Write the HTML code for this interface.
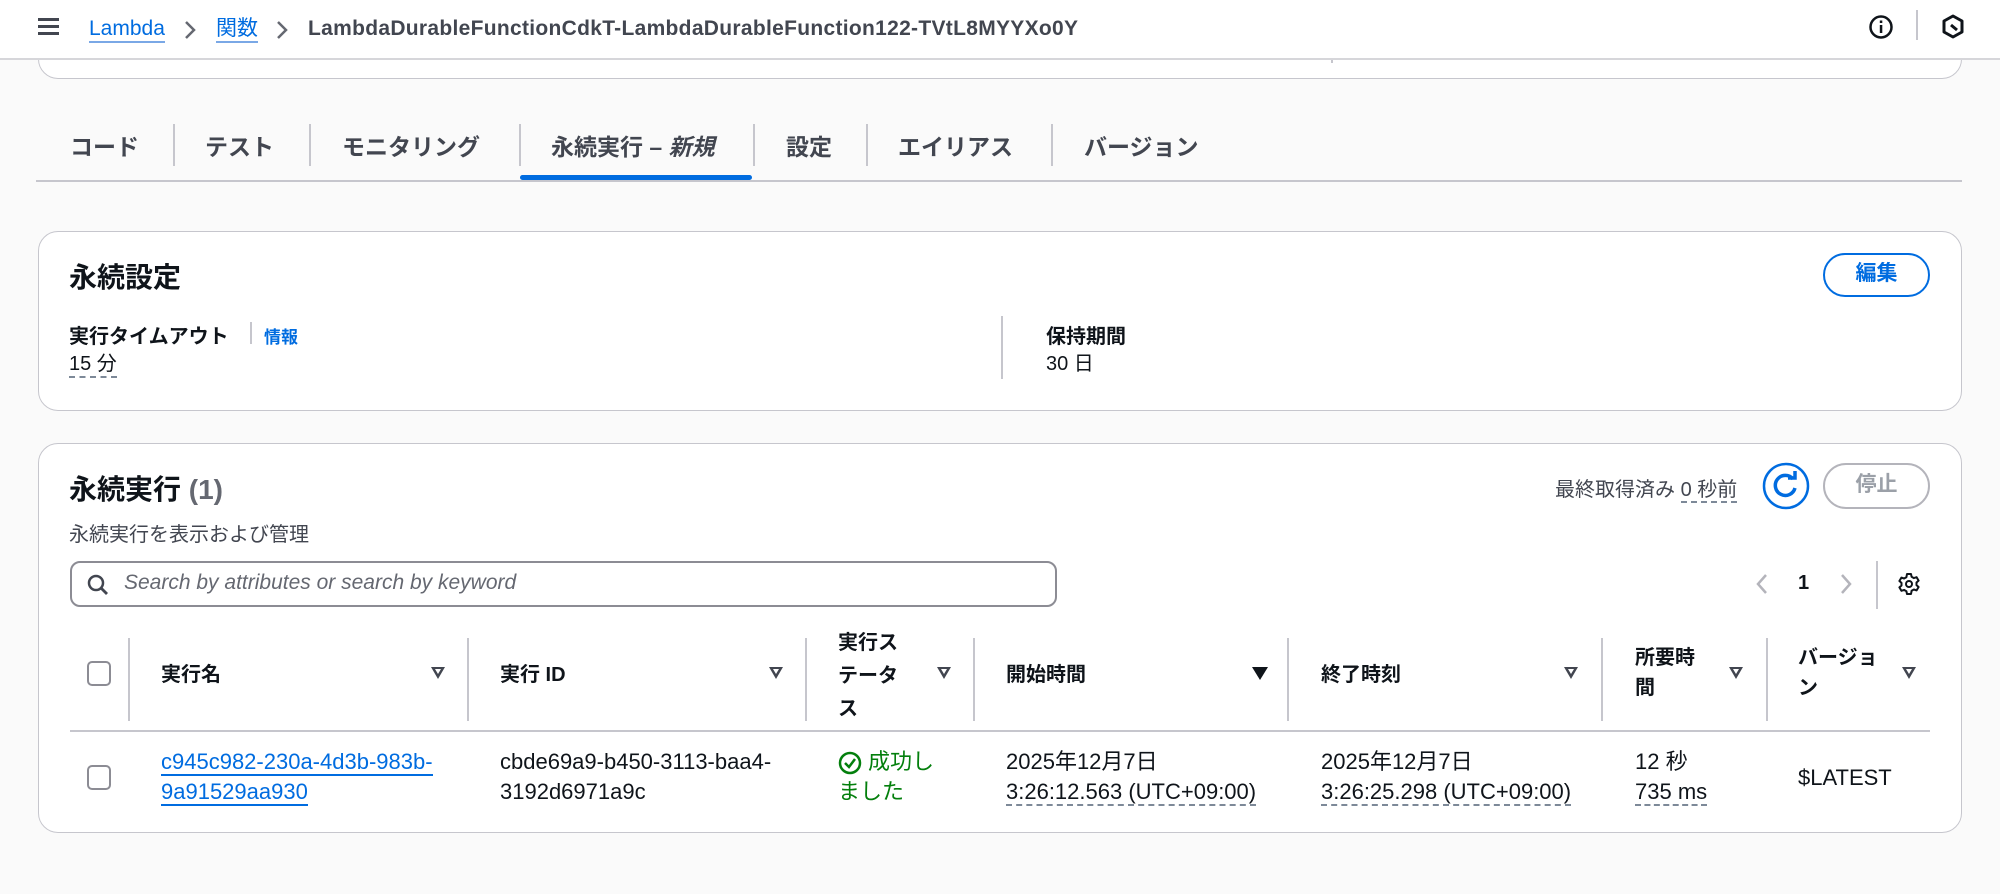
<!DOCTYPE html>
<html><head><meta charset="utf-8">
<style>
*{box-sizing:border-box;margin:0;padding:0}
body{width:2000px;height:894px;background:#fafafa;font-family:"Liberation Sans","Noto Sans CJK JP",sans-serif;color:#0f141a;position:relative;overflow:hidden;font-size:20px}
.a{position:absolute;white-space:nowrap}
.hdr{position:absolute;left:0;top:0;width:2000px;height:60px;background:#fff;border-bottom:2px solid #d6d6da;z-index:5}
.z{z-index:6}
.card{position:absolute;left:38px;width:1924px;background:#fff;border:1.5px solid #c6c6cd;border-radius:20px}
.blue{color:#006ce0}
.tab{position:absolute;top:128px;font-size:23px;font-weight:700;color:#424650}
.tdiv{position:absolute;top:124px;width:1.5px;height:42px;background:#c6c6cd}
.btn{position:absolute;border-radius:24px;font-weight:700;font-size:21px;text-align:center}
.th{position:absolute;font-weight:700;font-size:20px;line-height:33px}
.cdiv{position:absolute;top:638px;width:2px;height:83px;background:#c6c6cd}
.tri{position:absolute;top:667px;width:0;height:0;border-left:7px solid transparent;border-right:7px solid transparent;border-top:12px solid #424650}
.tri:after{content:"";position:absolute;left:-3px;top:-10px;border-left:3px solid transparent;border-right:3px solid transparent;border-top:5px solid #fff}
.cb{position:absolute;width:24px;height:25px;border:2px solid #8c8c94;border-radius:5px;background:#fff}
.dot{border-bottom:2px dashed #7d8998}
.td{position:absolute;font-size:22px;line-height:30px}
</style></head><body>
<div class="card" style="top:-40px;height:119px"></div>
<div class="a" style="left:1331px;top:55px;width:1.5px;height:8px;background:#c6c6cd"></div>

<div class="hdr"></div>
<div class="a z" style="left:38px;top:18px;width:21px;height:3px;background:#424650"></div>
<div class="a z" style="left:38px;top:25px;width:21px;height:3px;background:#424650"></div>
<div class="a z" style="left:38px;top:32px;width:21px;height:3px;background:#424650"></div>
<div class="a blue z" style="left:89px;top:17px;font-size:21px;border-bottom:2px solid #7aa8e6;line-height:24px">Lambda</div>
<svg class="a z" style="left:183px;top:20px" width="14" height="20"><path d="M3 2 L11 10 L3 18" stroke="#656871" stroke-width="2.5" fill="none"/></svg>
<div class="a blue z" style="left:216px;top:17px;font-size:21px;border-bottom:2px solid #7aa8e6;line-height:24px">関数</div>
<svg class="a z" style="left:275px;top:20px" width="14" height="20"><path d="M3 2 L11 10 L3 18" stroke="#656871" stroke-width="2.5" fill="none"/></svg>
<div class="a z" style="left:308px;top:17px;font-size:21px;font-weight:700;color:#424650;line-height:24px;letter-spacing:0.3px">LambdaDurableFunctionCdkT-LambdaDurableFunction122-TVtL8MYYXo0Y</div>
<svg class="a z" style="left:1868px;top:14px" width="26" height="26"><circle cx="13" cy="13" r="10.5" stroke="#0f141a" stroke-width="2.5" fill="none"/><rect x="11.8" y="11" width="2.5" height="8" fill="#0f141a"/><rect x="11.8" y="6.5" width="2.5" height="2.5" fill="#0f141a"/></svg>
<div class="a z" style="left:1916px;top:10px;width:1.5px;height:30px;background:#c6c6cd"></div>
<svg class="a z" style="left:1940px;top:13px" width="26" height="28"><path d="M13 3 L22 8 L22 19 L13 24 L4 19 L4 8 Z" stroke="#0f141a" stroke-width="3" fill="none" stroke-linejoin="round"/><path d="M11 12 L17 17" stroke="#0f141a" stroke-width="3"/></svg>

<div class="tab" style="left:70px">コード</div>
<div class="tdiv" style="left:173px"></div>
<div class="tab" style="left:205px">テスト</div>
<div class="tdiv" style="left:309px"></div>
<div class="tab" style="left:342px">モニタリング</div>
<div class="tdiv" style="left:519px"></div>
<div class="tab blue" style="left:551px">永続実行 – <i>新規</i></div>
<div class="a" style="left:520px;top:175px;width:232px;height:5px;background:#006ce0;border-radius:3px"></div>
<div class="tdiv" style="left:753px"></div>
<div class="tab" style="left:786px">設定</div>
<div class="tdiv" style="left:866px"></div>
<div class="tab" style="left:898px">エイリアス</div>
<div class="tdiv" style="left:1051px"></div>
<div class="tab" style="left:1084px">バージョン</div>
<div class="a" style="left:36px;top:180px;width:1926px;height:1.5px;background:#c6c6cd"></div>

<div class="card" style="top:231px;height:180px"></div>
<div class="a" style="left:69px;top:256px;font-size:28px;font-weight:700">永続設定</div>
<div class="btn blue" style="left:1823px;top:253px;width:107px;height:44px;border:2.5px solid #006ce0;line-height:38px">編集</div>
<div class="a" style="left:69px;top:320px;font-weight:700">実行タイムアウト</div>
<div class="a" style="left:250px;top:322px;width:1.5px;height:22px;background:#c6c6cd"></div>
<div class="a blue" style="left:264px;top:323px;font-size:17px;font-weight:700">情報</div>
<div class="a dot" style="left:69px;top:352px;line-height:24px">15 分</div>
<div class="a" style="left:1001px;top:316px;width:1.5px;height:63px;background:#c6c6cd"></div>
<div class="a" style="left:1046px;top:320px;font-weight:700">保持期間</div>
<div class="a" style="left:1046px;top:352px;line-height:24px">30 日</div>

<div class="card" style="top:443px;height:390px"></div>
<div class="a" style="left:69px;top:468px;font-size:28px;font-weight:700">永続実行 <span style="color:#656871">(1)</span></div>
<div class="a" style="left:69px;top:518px;color:#424650">永続実行を表示および管理</div>
<div class="a" style="left:1555px;top:473px;color:#424650">最終取得済み <span class="dot">0 秒前</span></div>
<svg class="a" style="left:1762px;top:462px" width="48" height="48"><circle cx="24" cy="24" r="22" stroke="#006ce0" stroke-width="2.5" fill="none"/><path d="M31 17 A10 10 0 1 0 33 26" stroke="#006ce0" stroke-width="3.5" fill="none"/><path d="M26 16 L33 16 L33 9" stroke="#006ce0" stroke-width="3.5" fill="none"/></svg>
<div class="btn" style="left:1823px;top:463px;width:107px;height:46px;border:2.5px solid #b4b4bb;color:#9ba0a8;line-height:40px">停止</div>
<div class="a" style="left:70px;top:561px;width:987px;height:46px;border:2px solid #8c8c94;border-radius:10px;background:#fff"></div>
<svg class="a" style="left:86px;top:573px" width="24" height="24"><circle cx="10" cy="10" r="7" stroke="#424650" stroke-width="2.5" fill="none"/><path d="M15 15 L21 21" stroke="#424650" stroke-width="2.8"/></svg>
<div class="a" style="left:124px;top:571px;font-style:italic;color:#656871;font-size:21px">Search by attributes or search by keyword</div>
<svg class="a" style="left:1754px;top:572px" width="16" height="24"><path d="M12 3 L4 12 L12 21" stroke="#b4b4bb" stroke-width="2.5" fill="none"/></svg>
<div class="a" style="left:1798px;top:572px;font-weight:700">1</div>
<svg class="a" style="left:1838px;top:572px" width="16" height="24"><path d="M4 3 L12 12 L4 21" stroke="#b4b4bb" stroke-width="2.5" fill="none"/></svg>
<div class="a" style="left:1876px;top:561px;width:1.5px;height:48px;background:#c6c6cd"></div>
<svg class="a" style="left:1897px;top:572px" width="24" height="24" viewBox="0 0 24 24"><path d="M10 2h4l.6 2.8 2.3 1.3 2.7-.9 2 3.4-2.1 1.9v2.6l2.1 1.9-2 3.4-2.7-.9-2.3 1.3L14 22h-4l-.6-2.8-2.3-1.3-2.7.9-2-3.4 2.1-1.9v-2.6L2.4 9l2-3.4 2.7.9 2.3-1.3z" stroke="#0f141a" stroke-width="2" fill="none" stroke-linejoin="round"/><circle cx="12" cy="12" r="3" stroke="#0f141a" stroke-width="2" fill="none"/></svg>

<div class="cb" style="left:87px;top:661px"></div>
<div class="cdiv" style="left:128px"></div>
<div class="th" style="left:161px;top:659px">実行名</div>
<div class="tri" style="left:431px"></div>
<div class="cdiv" style="left:467px"></div>
<div class="th" style="left:500px;top:659px">実行 ID</div>
<div class="tri" style="left:769px"></div>
<div class="cdiv" style="left:805px"></div>
<div class="th" style="left:838px;top:627px">実行ス<br>テータ<br>ス</div>
<div class="tri" style="left:937px"></div>
<div class="cdiv" style="left:973px"></div>
<div class="th" style="left:1006px;top:659px">開始時間</div>
<div class="a" style="left:1252px;top:667px;border-left:8px solid transparent;border-right:8px solid transparent;border-top:13px solid #0f141a"></div>
<div class="cdiv" style="left:1287px"></div>
<div class="th" style="left:1321px;top:659px">終了時刻</div>
<div class="tri" style="left:1564px"></div>
<div class="cdiv" style="left:1601px"></div>
<div class="th" style="left:1635px;top:643px;line-height:30px">所要時<br>間</div>
<div class="tri" style="left:1729px"></div>
<div class="cdiv" style="left:1766px"></div>
<div class="th" style="left:1798px;top:643px;line-height:30px">バージョ<br>ン</div>
<div class="tri" style="left:1902px"></div>
<div class="a" style="left:70px;top:730px;width:1860px;height:2px;background:#c6c6cd"></div>

<div class="cb" style="left:87px;top:765px"></div>
<div class="td blue" style="left:161px;top:747px"><span style="border-bottom:2px solid #006ce0">c945c982-230a-4d3b-983b-</span><br><span style="border-bottom:2px solid #006ce0">9a91529aa930</span></div>
<div class="td" style="left:500px;top:747px">cbde69a9-b450-3113-baa4-<br>3192d6971a9c</div>
<svg class="a" style="left:838px;top:751px" width="24" height="24"><circle cx="12" cy="12" r="10" stroke="#037f0c" stroke-width="2.5" fill="none"/><path d="M7 12 L11 16 L17 8" stroke="#037f0c" stroke-width="2.5" fill="none"/></svg>
<div class="td" style="left:838px;top:747px;color:#037f0c"><span style="padding-left:30px">成功し</span><br>ました</div>
<div class="td" style="left:1006px;top:747px">2025年12月7日<br><span class="dot">3:26:12.563 (UTC+09:00)</span></div>
<div class="td" style="left:1321px;top:747px">2025年12月7日<br><span class="dot">3:26:25.298 (UTC+09:00)</span></div>
<div class="td" style="left:1635px;top:747px">12 秒<br><span class="dot">735 ms</span></div>
<div class="td" style="left:1798px;top:763px">$LATEST</div>
</body></html>
